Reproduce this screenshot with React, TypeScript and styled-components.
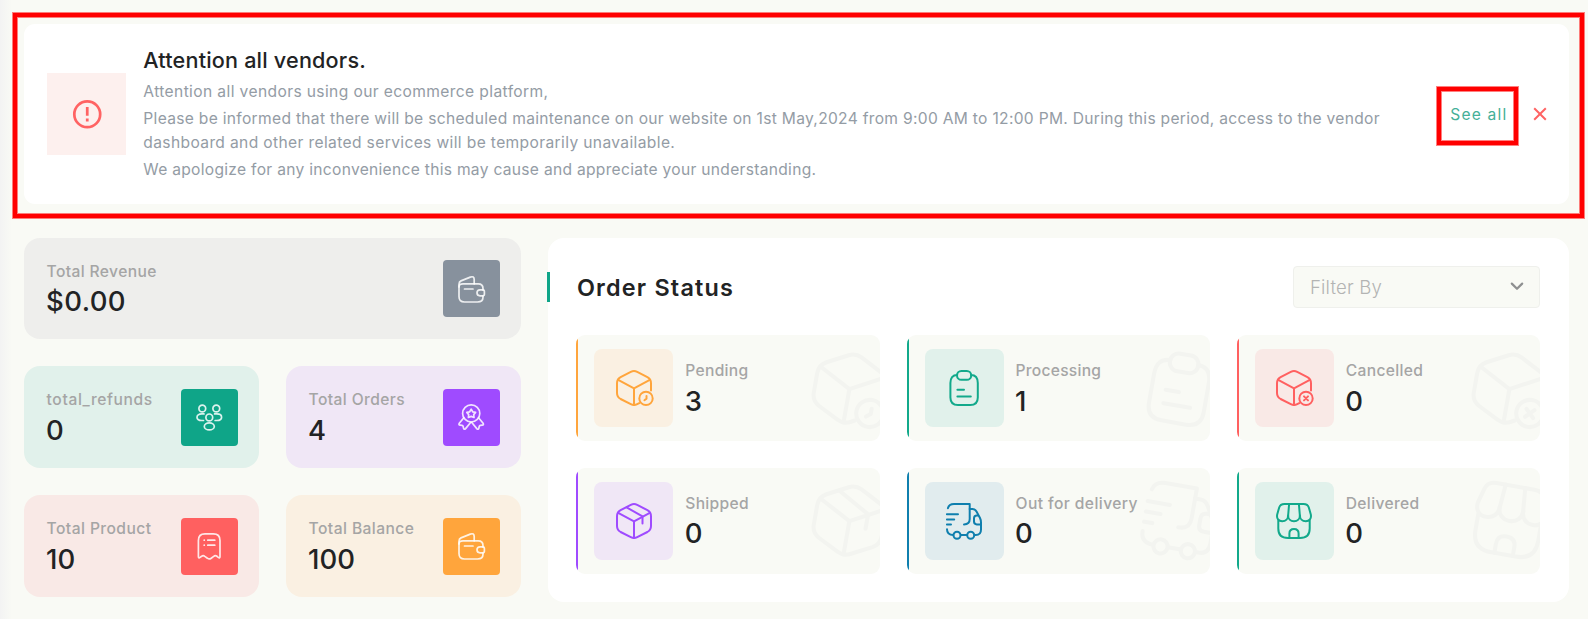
import React from 'react';
import styled, { createGlobalStyle } from 'styled-components';

const GlobalStyle = createGlobalStyle`
  * { box-sizing: border-box; }
  html, body { margin: 0; padding: 0; }
  body {
    background: #f9faf5;
    font-family: Inter, "Liberation Sans", sans-serif;
    color: #222324;
    overflow: hidden;
  }
  h1, h2, p { margin: 0; }
`;

const Page = styled.div`
  position: relative;
  width: 1588px;
  height: 619px;
  padding: 24px 18.7px 0 24.3px;
  background: linear-gradient(to right, #f3f3f3 0, #f9faf5 12px);
`;

/* Notice */

const Notice = styled.section`
  display: flex;
  align-items: center;
  height: 180px;
  padding: 0 22px 0 23px;
  background: #fff;
  border-radius: 11px;
`;

const NoticeIcon = styled.div`
  display: flex;
  align-items: center;
  justify-content: center;
  flex: none;
  width: 79px;
  height: 82px;
  margin-right: 17px;
  background: #fdf0ee;
  color: #ff6363;
`;

const NoticeBody = styled.div`
  flex: 1;
  display: flex;
  flex-direction: column;
  gap: 3px;
  color: #949ca5;
  font-size: 15.6px;
  line-height: 24px;
  white-space: nowrap;
`;

const NoticeTitle = styled.h1<{ $track: number }>`
  margin-bottom: 3.6px;
  color: #222324;
  font-size: 21.6px;
  font-weight: 500;
  line-height: 28px;
  letter-spacing: ${(p) => p.$track}px;
`;

const Line = styled.span<{ $track: number }>`
  display: block;
  letter-spacing: ${(p) => p.$track}px;
`;

const SeeAll = styled.a`
  padding-top: 1px;
  margin-right: 25.8px;
  color: #45b098;
  font-size: 15.6px;
  line-height: 24px;
  letter-spacing: 1.2px;
`;

const Frame = styled.div<{ $x: number; $y: number; $w: number; $h: number }>`
  position: absolute;
  left: ${(p) => p.$x}px;
  top: ${(p) => p.$y}px;
  width: ${(p) => p.$w}px;
  height: ${(p) => p.$h}px;
  border: 4px solid #ff0000;
  box-shadow: 0 0 0 1px rgba(255, 0, 0, 0.5), inset 0 0 0 1px rgba(255, 0, 0, 0.5);
  pointer-events: none;
`;

/* Dashboard */

const Dashboard = styled.main`
  display: flex;
  gap: 27px;
  margin-top: 34.3px;
`;

const Stats = styled.div`
  display: grid;
  flex: none;
  width: 497px;
  grid-template-columns: 1fr 1fr;
  grid-template-rows: 101px 102px 102px;
  gap: 27px;
`;

const StatCard = styled.div<{ $bg: string; $wide?: boolean }>`
  display: flex;
  align-items: center;
  justify-content: space-between;
  padding: 0 21.2px 0 22.3px;
  border-radius: 16px;
  background: ${(p) => p.$bg};
  ${(p) => p.$wide && 'grid-column: span 2;'}
`;

const StatIcon = styled.div<{ $bg: string }>`
  display: flex;
  align-items: center;
  justify-content: center;
  width: 57px;
  height: 57px;
  border-radius: 4px;
  background: ${(p) => p.$bg};
  color: rgba(255, 255, 255, 0.85);
`;

const Label = styled.div<{ $track: number }>`
  color: #a5a5a5;
  font-size: 15.6px;
  font-weight: 450;
  line-height: 24px;
  letter-spacing: ${(p) => p.$track}px;
  white-space: nowrap;
`;

const Value = styled.div<{ $track?: number }>`
  margin-top: 0.6px;
  margin-left: -0.5px;
  font-size: 27.5px;
  font-weight: 500;
  line-height: 34px;
  letter-spacing: ${(p) => p.$track ?? 0}px;
`;

const StatText = styled.div`
  padding-top: 0.8px;
`;

const Panel = styled.section`
  flex: 1;
  padding: 27.7px 29px 28px 28px;
  border-radius: 16px;
  background: #fff;
`;

const PanelHeader = styled.header`
  display: flex;
  align-items: center;
  justify-content: space-between;
  height: 42px;
  margin-bottom: 27.3px;
`;

const PanelTitle = styled.h2`
  position: relative;
  height: 30px;
  padding: 1px 0 0 0.6px;
  font-size: 23.4px;
  font-weight: 600;
  line-height: 30px;
  letter-spacing: 1.2px;
  &::before {
    content: '';
    position: absolute;
    left: -29px;
    top: 0;
    width: 3px;
    height: 30px;
    background: #0fa588;
  }
`;

const Filter = styled.div`
  display: flex;
  align-items: center;
  justify-content: space-between;
  width: 247px;
  height: 42px;
  padding: 1px 15px 0 15.6px;
  border: 1px solid #eff0ec;
  border-radius: 4px;
  background: #f9faf5;
  color: #b3b4b3;
  font-size: 18.6px;
  font-weight: 350;
  letter-spacing: 0.2px;
`;

const Tiles = styled.div`
  display: grid;
  grid-template-columns: repeat(3, 1fr);
  grid-auto-rows: 105.7px;
  gap: 27px 26.7px;
`;

const Tile = styled.article<{ $color: string }>`
  position: relative;
  display: flex;
  align-items: center;
  gap: 12px;
  padding-left: 18px;
  border-radius: 9px;
  background: #f9faf5;
  overflow: hidden;
  &::before {
    content: '';
    position: absolute;
    inset: 0 auto 0 0;
    width: 2.2px;
    background: ${(p) => p.$color};
  }
`;

const TileIcon = styled.div<{ $bg: string; $color: string }>`
  display: flex;
  align-items: center;
  justify-content: center;
  flex: none;
  width: 79px;
  height: 78.5px;
  border-radius: 8px;
  background: ${(p) => p.$bg};
  color: ${(p) => p.$color};
`;

const Watermark = styled.div`
  position: absolute;
  top: 16.3px;
  right: -6px;
  width: 73px;
  height: 73px;
  color: #f3f4f0;
  transform: rotate(10deg);
`;

const TileText = styled.div`
  padding-top: 0.2px;
`;

const Svg = styled.svg`
  display: block;
  overflow: visible;
  fill: none;
  stroke: currentColor;
  stroke-linecap: round;
  stroke-linejoin: round;
`;

const BOX_FULL =
  'M14.8 1.9Q18 .3 21.2 1.9L31.4 7.2Q35 9.2 35 13.2V23Q35 27 31.4 29L21.2 34.2Q18 35.8 14.8 34.2L4.6 29Q1 27 1 23V13.2Q1 9.2 4.6 7.2Z';
const BOX_OPEN =
  'M23.3 33.1L21.2 34.2Q18 35.8 14.8 34.2L4.6 29Q1 27 1 23V13.2Q1 9.2 4.6 7.2L14.8 1.9Q18 .3 21.2 1.9L31.4 7.2Q35 9.2 35 13.2V20.5';
const BOX_EDGES = 'M2.2 9.9L18 18.3L33.8 9.9M18 18.3V35';

const glyphs: Record<string, React.ReactNode> = {
  pending: (
    <>
      <path d={BOX_OPEN} />
      <path d={BOX_EDGES} />
      <circle cx="30" cy="28.4" r="6.7" />
      <path d="M30.5 25.9V28.6L28.4 30.2" />
    </>
  ),
  cancelled: (
    <>
      <path d={BOX_OPEN} />
      <path d={BOX_EDGES} />
      <circle cx="30" cy="28.4" r="6.7" />
      <path d="M28 26.4L32 30.4M32 26.4L28 30.4" />
    </>
  ),
  shipped: (
    <>
      <path d={BOX_FULL} />
      <path d={BOX_EDGES} />
      <path d="M10.6 4.4L26.5 13.4V20.6" />
    </>
  ),
  processing: (
    <>
      <path d="M11.2 5C6.6 5 4.4 8 4.4 13V27.4Q4.4 35 12 35H24.2Q31.8 35 31.8 27.4V13C31.8 8 29.6 5 25 5" />
      <rect x="11" y="1" width="14.2" height="8.8" rx="4.4" />
      <path d="M11.4 19.8H18M11.4 26.5H24.8" />
    </>
  ),
  truck: (
    <>
      <path d="M1.9 5.2Q3 1 8 1H23.7V16Q23.7 21.4 18 21.4" />
      <path d="M23.7 6H26.5Q29 6 30.5 8.6L34 15Q35 17 35 19.5V26.5Q35 32 29.8 32H28.3" />
      <path d="M32 12.4H30.8Q28 12.4 28 15.2V18.6Q28 21.4 30.8 21.4H35" />
      <path d="M.9 11.3H12M.9 16.5H8.2M.9 21.6H5" />
      <path d="M1 26.3Q1 32 7.3 32M14.7 32H21.2" />
      <circle cx="11" cy="32.2" r="3.5" />
      <circle cx="24.7" cy="32.2" r="3.5" />
    </>
  ),
  store: (
    <>
      <path d="M8.5 .9H27.5Q31.8 .9 32.8 4.4L34.8 11.5C35.6 15.5 33.4 18.2 29.8 18.2C26.2 18.2 23.9 15.8 23.9 12.4C23.9 15.8 21.6 18.2 18 18.2S12.1 15.8 12.1 12.4C12.1 15.8 9.8 18.2 6.2 18.2C2.6 18.2 .4 15.5 1.2 11.5L3.2 4.4Q4.2 .9 8.5 .9Z" />
      <path d="M13.1 1L12.1 13M22.9 1L23.9 13" />
      <path d="M2.3 17.5V25.5Q2.3 35 12 35H24Q33.7 35 33.7 25.5V17.5" />
      <path d="M13.4 35V30.5Q13.4 26 18 26T22.6 30.5V35" />
    </>
  ),
  wallet: (
    <>
      <path d="M25 14V12.5Q25 7.8 20.3 7.8H5Q1 7.8 1 11V20.5Q1 26 6.5 26H19.5Q25 26 25 21.3V20" />
      <path d="M1 11V8.2Q1 5.8 3 4.9L12.3 1.1Q16.2 -.2 16.2 3.6V7.8" />
      <path d="M24.6 13.8H22a3 3 0 0 0 0 6H24.6Q26.4 19.8 26.4 18.2V15.4Q26.4 13.8 24.6 13.8Z" />
      <path d="M6.5 13H15" />
    </>
  ),
  people: (
    <>
      <circle cx="6.3" cy="4.5" r="3.4" />
      <circle cx="20.3" cy="4.5" r="3.4" />
      <circle cx="13.3" cy="13.4" r="3.4" />
      <ellipse cx="13.3" cy="22.4" rx="5" ry="3.5" />
      <path d="M8 9.9H5.8C2.6 9.9 1 11.4 1 13.2S2.6 16.5 5.8 16.5H7.5M18.6 9.9H20.8C24 9.9 25.6 11.4 25.6 13.2S24 16.5 20.8 16.5H19.1" />
    </>
  ),
  award: (
    <>
      <circle cx="13.2" cy="9.4" r="8.6" />
      <path d="M13.2 5.2L14.7 7.8L17.6 8.4L15.7 10.6L16 13.5L13.2 12.4L10.4 13.5L10.7 10.6L8.8 8.4L11.7 7.8Z" />
      <path d="M5.6 14L1.3 19.3Q.3 21 2.2 21.2L4 21.4Q4.9 21.5 5.2 22.6L5.6 24.4Q6.2 26 7.6 24.6L12.8 18.3" />
      <path d="M20.8 14L25.1 19.3Q26.1 21 24.2 21.2L22.4 21.4Q21.5 21.5 21.2 22.6L20.8 24.4Q20.2 26 18.8 24.6L13.6 18.3" />
    </>
  ),
  receipt: (
    <>
      <path d="M2.4 23.4V7.4Q2.4 .9 9 .9H17.4Q24 .9 24 7.4V23.4Q24 25.6 22.3 24.4L20.9 23.3Q19.2 22 17.7 23.4L15.2 25.2Q13.2 26.6 11.4 25.2L8.8 23.4Q7.2 22 5.6 23.3L4.1 24.4Q2.4 25.6 2.4 23.4Z" />
      <path d="M8.2 7.2H8.3M11.8 7.2H18.8M8.2 12.2H8.3M11.8 12.2H18.8" />
    </>
  ),
};

type GlyphProps = { name: string; size: number; box: number; stroke: number };

const Glyph = ({ name, size, box, stroke }: GlyphProps) => (
  <Svg width={size} height={size} viewBox={`0 0 ${box} ${box}`} strokeWidth={stroke}>
    {glyphs[name]}
  </Svg>
);

const stats = [
  { label: 'Total Revenue', value: '$0.00', icon: 'wallet', bg: '#eeeeec', color: '#87919d', track: 0.38, valueTrack: 0.4, wide: true },
  { label: 'total_refunds', value: '0', icon: 'people', bg: '#e1f1eb', color: '#0fa588', track: 0.62 },
  { label: 'Total Orders', value: '4', icon: 'award', bg: '#f0e7f6', color: '#9f4bff', track: 0.4 },
  { label: 'Total Product', value: '10', icon: 'receipt', bg: '#f9e9e6', color: '#ff6060', track: 0.43 },
  { label: 'Total Balance', value: '100', icon: 'wallet', bg: '#faf0e2', color: '#ffa53c', track: 0.43 },
];

const statuses = [
  { label: 'Pending', value: 3, icon: 'pending', bg: '#faf0e2', color: '#ffa53c', track: 0.3 },
  { label: 'Processing', value: 1, icon: 'processing', bg: '#e1f1eb', color: '#12a98b', track: 0.26 },
  { label: 'Cancelled', value: 0, icon: 'cancelled', bg: '#f9e9e6', color: '#ff6060', track: 0.34 },
  { label: 'Shipped', value: 0, icon: 'shipped', bg: '#f0e7f6', color: '#9f4bff', track: 0.3 },
  { label: 'Out for delivery', value: 0, icon: 'truck', bg: '#e1ecee', color: '#0f7fae', track: 0.42 },
  { label: 'Delivered', value: 0, icon: 'store', bg: '#e1f1eb', color: '#12a98b', track: 0.34 },
];

export default function App() {
  return (
    <Page>
      <GlobalStyle />
      <Notice>
        <NoticeIcon>
          <Svg width="34.5" height="34.5" viewBox="0 0 24 24" strokeWidth="1.9">
            <circle cx="12" cy="12" r="9" />
            <path d="M12 7V13M12 15V17" strokeLinecap="butt" />
          </Svg>
        </NoticeIcon>
        <NoticeBody>
          <NoticeTitle $track={0.19}>Attention all vendors.</NoticeTitle>
          <Line $track={0.38}>Attention all vendors using our ecommerce platform,</Line>
          <div>
            <Line $track={0.3}>
              Please be informed that there will be scheduled maintenance on our website on 1st May,2024 from 9:00 AM to
              12:00 PM. During this period, access to the vendor
            </Line>
            <Line $track={0.36}>dashboard and other related services will be temporarily unavailable.</Line>
          </div>
          <Line $track={0.29}>We apologize for any inconvenience this may cause and appreciate your understanding.</Line>
        </NoticeBody>
        <SeeAll>See all</SeeAll>
        <Svg width="14" height="14" viewBox="0 0 14 14" strokeWidth="2" color="#ff6363">
          <path d="M1.2 1.2L12.8 12.8M12.8 1.2L1.2 12.8" strokeLinecap="butt" />
        </Svg>
      </Notice>

      <Dashboard>
        <Stats>
          {stats.map((s) => (
            <StatCard key={s.label} $bg={s.bg} $wide={s.wide}>
              <StatText>
                <Label $track={s.track}>{s.label}</Label>
                <Value $track={s.valueTrack}>{s.value}</Value>
              </StatText>
              <StatIcon $bg={s.color}>
                <Glyph name={s.icon} size={26.4} box={26.4} stroke={1.7} />
              </StatIcon>
            </StatCard>
          ))}
        </Stats>

        <Panel>
          <PanelHeader>
            <PanelTitle>Order Status</PanelTitle>
            <Filter>
              Filter By
              <Svg width="14" height="10" viewBox="0 0 14 10" strokeWidth="2.2" color="#8f9091">
                <path d="M1.8 1.6L7 6.8L12.2 1.6" />
              </Svg>
            </Filter>
          </PanelHeader>
          <Tiles>
            {statuses.map((s) => (
              <Tile key={s.label} $color={s.color}>
                <TileIcon $bg={s.bg} $color={s.color}>
                  <Glyph name={s.icon} size={36} box={36} stroke={2} />
                </TileIcon>
                <Watermark>
                  <Glyph name={s.icon} size={73} box={36} stroke={2} />
                </Watermark>
                <TileText>
                  <Label $track={s.track}>{s.label}</Label>
                  <Value>{s.value}</Value>
                </TileText>
              </Tile>
            ))}
          </Tiles>
        </Panel>
      </Dashboard>

      <Frame $x={13} $y={13} $w={1571} $h={205} />
      <Frame $x={1437} $y={87} $w={81} $h={58} />
    </Page>
  );
}
